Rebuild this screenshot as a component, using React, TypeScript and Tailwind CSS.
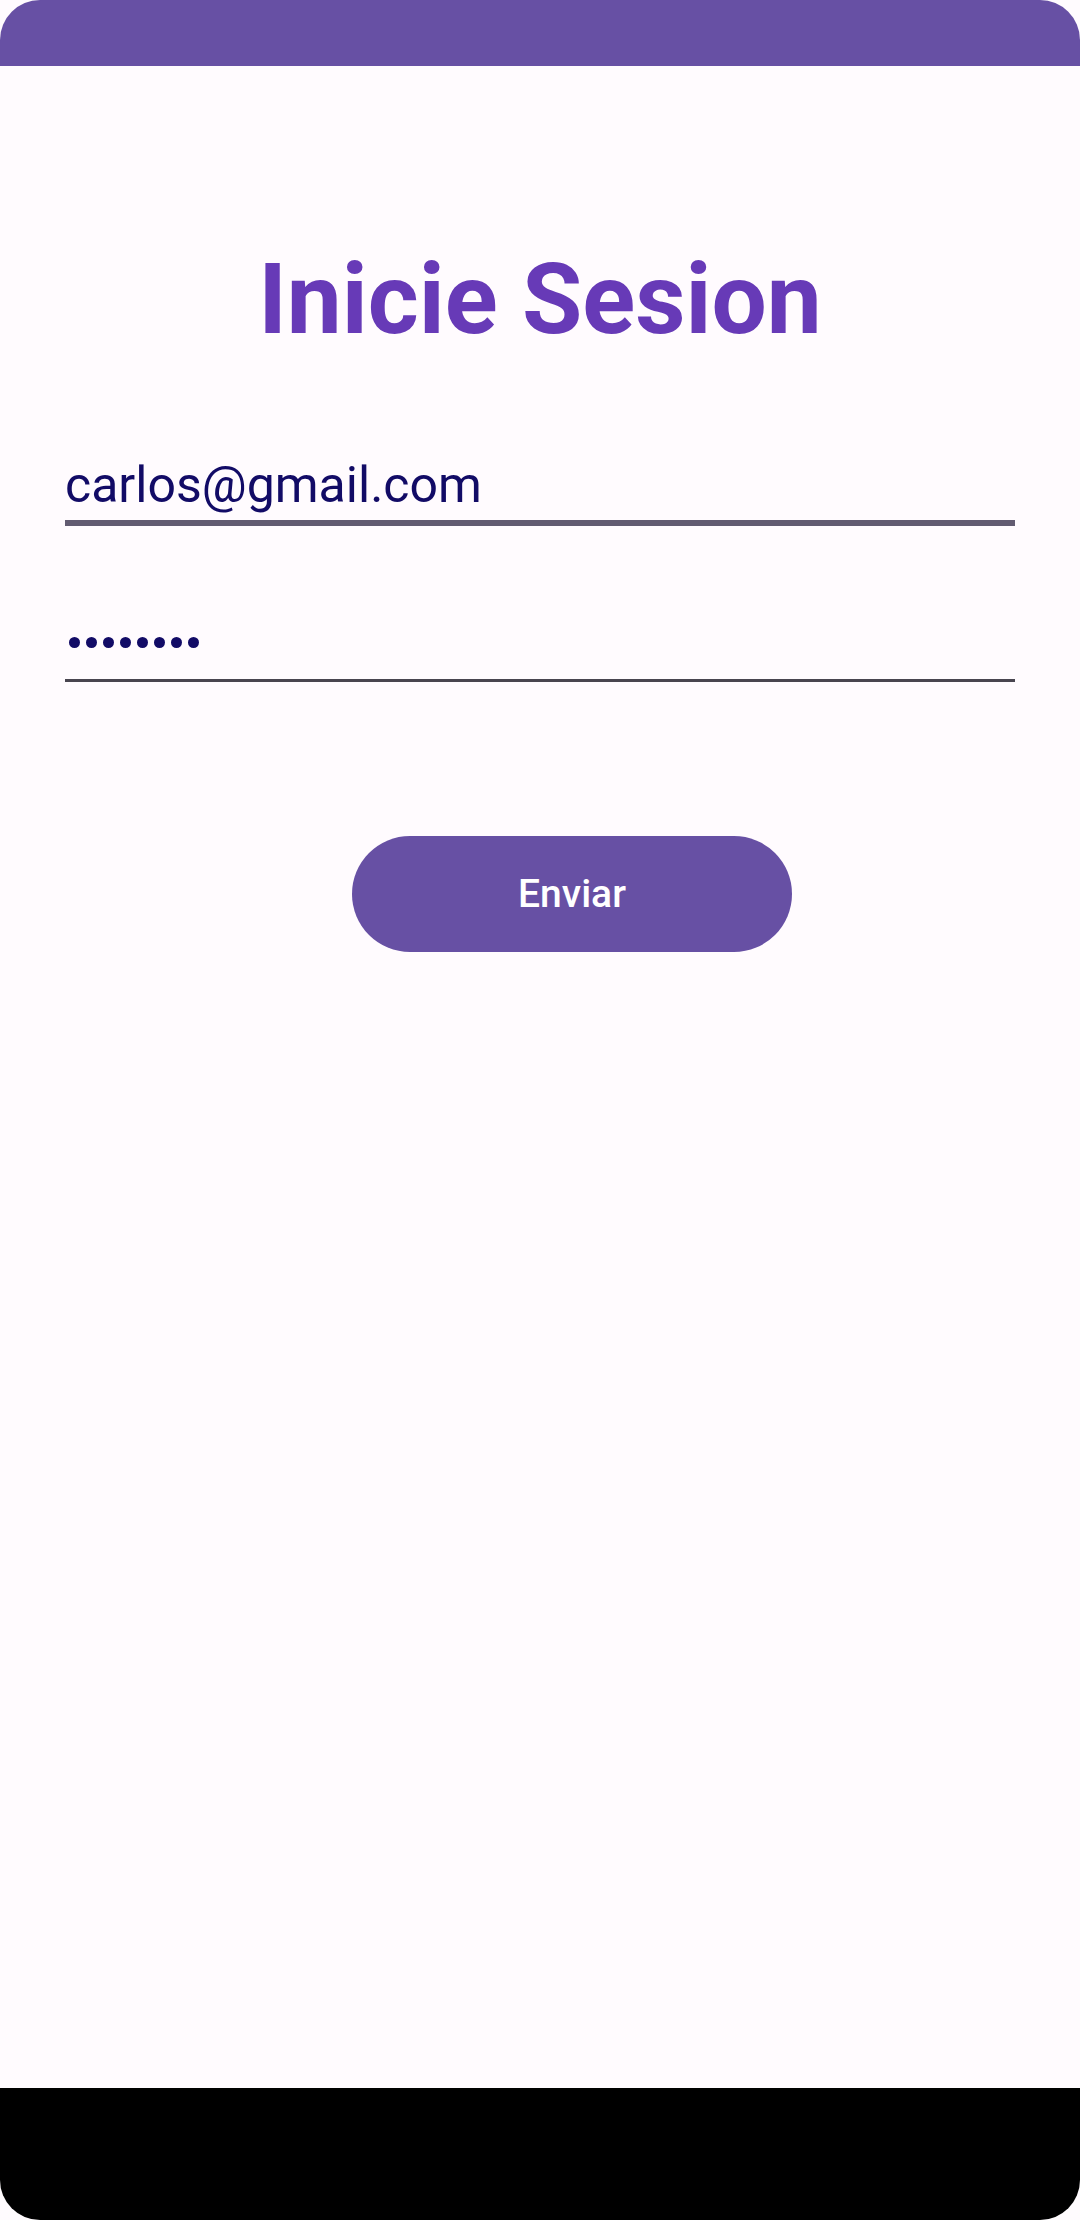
export default function App() {
  const dots = [0, 1, 2, 3, 4, 5, 6, 7];

  return (
    <div className="flex h-[2220px] w-[1080px] flex-col bg-[#fffbfe] font-['Roboto',sans-serif]">
      <div className="h-[66px] shrink-0 rounded-t-[40px] bg-[#6750a4]" />

      <h1 className="mt-[185px] text-center text-[98px] font-bold leading-none text-[#673ab7]">
        Inicie Sesion
      </h1>

      <div className="mt-[111px] px-[65px]">
        <div className="border-b-[6px] border-[#625b71] pb-[10px] text-[50px] leading-none text-[#120b66]">
          carlos@gmail.com
        </div>
      </div>

      <div className="mt-[106px] px-[65px]">
        <div className="border-b-[3px] border-[#49454f] pb-[27px]">
          <div className="flex h-[20px] items-center gap-[6px] pl-[4px]">
            {dots.map((d) => (
              <span key={d} className="h-[11px] w-[11px] rounded-full bg-[#120b66]" />
            ))}
          </div>
        </div>
      </div>

      <div className="mt-[154px] flex justify-center pl-[64px]">
        <button className="h-[116px] w-[440px] rounded-full bg-[#6750a4] text-[39px] font-medium text-white">
          Enviar
        </button>
      </div>

      <div className="flex-1" />
      <div className="h-[132px] shrink-0 rounded-b-[40px] bg-black" />
    </div>
  );
}
